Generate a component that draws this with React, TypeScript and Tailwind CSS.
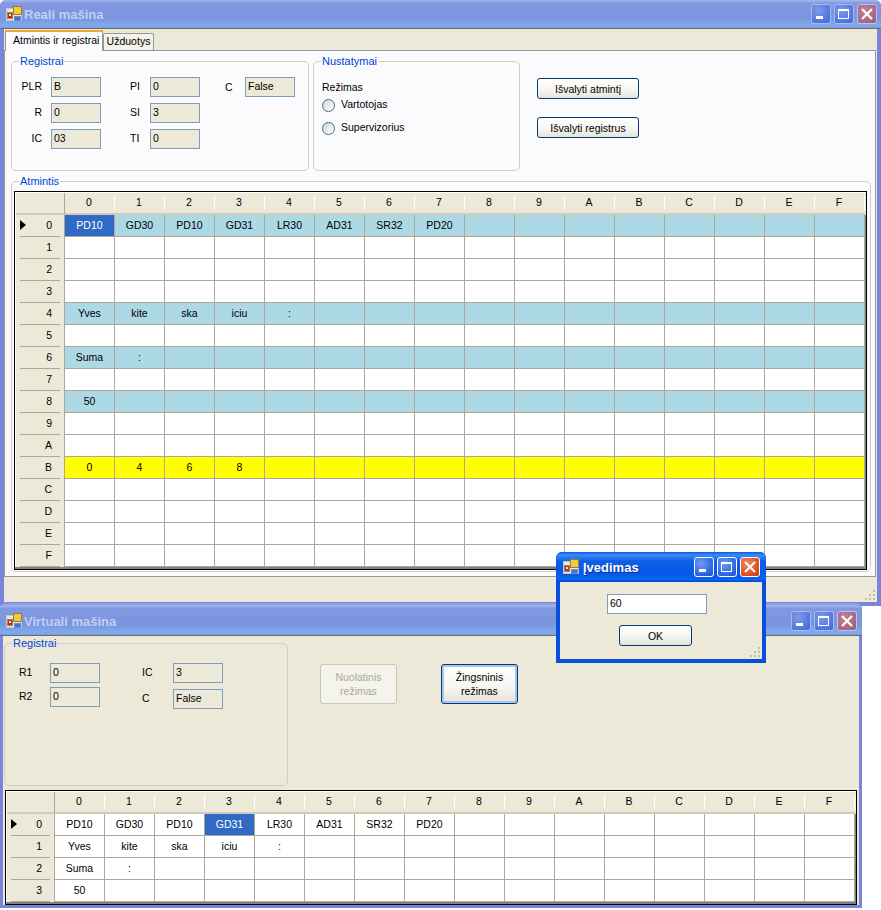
import React from 'react';

const ROW_LABELS = ['0', '1', '2', '3', '4', '5', '6', '7', '8', '9', 'A', 'B', 'C', 'D', 'E', 'F'];
const COLS = ROW_LABELS;
const PROGRAM = ['PD10', 'GD30', 'PD10', 'GD31', 'LR30', 'AD31', 'SR32', 'PD20'];

const AppIcon = () => (
  <svg width="16" height="16" viewBox="0 0 16 16" shapeRendering="crispEdges" className="shrink-0">
    <rect x="0" y="2" width="16" height="13" fill="#c9c6bd" />
    <rect x="1" y="3" width="14" height="11" fill="#e8e6dd" />
    <rect x="1" y="6" width="6" height="7" fill="#8c8a80" />
    <rect x="2" y="7" width="4" height="5" fill="#d2231c" />
    <rect x="3" y="8" width="2" height="2" fill="#f7e8a0" />
    <rect x="7" y="0" width="9" height="9" fill="#8f7f3d" />
    <rect x="8" y="1" width="7" height="7" fill="#f6c935" />
    <rect x="8" y="10" width="7" height="5" fill="#6d8fc7" />
    <rect x="9" y="11" width="5" height="3" fill="#3f76d8" />
  </svg>
);

const CaptionButton = ({ kind, active }: { kind: 'min' | 'max' | 'close'; active: boolean }) => {
  const tone =
    kind === 'close'
      ? active
        ? 'bg-[radial-gradient(circle_at_35%_30%,#ee8a5e,#df4f22_65%,#c23a14)] border-white'
        : 'bg-[radial-gradient(circle_at_35%_30%,#bb8296,#ab6580_70%,#9a5c7c)] border-[#b9c3ec]'
      : active
        ? 'bg-[radial-gradient(circle_at_35%_30%,#6f9bf5,#2f66e2_65%,#1f4fd0)] border-white'
        : 'bg-[radial-gradient(circle_at_35%_30%,#7f9be8,#4f75df_70%,#4468d8)] border-[#a9bbea]';
  return (
    <div className={`w-[20px] h-[20px] rounded-[3px] border flex items-center justify-center ${tone}`}>
      <svg width="18" height="18" viewBox="0 0 18 18" shapeRendering="crispEdges" fill="none">
        {kind === 'min' && <rect x="4" y="11" width="7" height="3" fill="#fff" />}
        {kind === 'max' && (
          <>
            <rect x="3.5" y="4.5" width="10" height="9" stroke="#fff" />
            <rect x="3" y="4" width="11" height="2" fill="#fff" />
          </>
        )}
        {kind === 'close' && (
          <path d="M4 4 L14 14 M14 4 L4 14" stroke="#fff" strokeWidth="2.2" shapeRendering="auto" />
        )}
      </svg>
    </div>
  );
};

const GroupBox = ({ title, legendBg, className, children }: { title: string; legendBg: string; className: string; children?: React.ReactNode }) => (
  <div className={`relative border border-[#d0d0bf] rounded-[5px] ${className}`}>
    <span className={`absolute left-[7px] -top-[8px] px-[1px] text-[#0046d5] text-[11px] leading-[14px] ${legendBg}`}>{title}</span>
    {children}
  </div>
);

const Field = ({ value, className = '' }: { value: string; className?: string }) => (
  <div className={`w-[50px] h-[20px] border border-[#7f9db9] bg-[#ece9d8] pl-[2px] flex items-center ${className}`}>{value}</div>
);

const XpButton = ({ children, className }: { children: React.ReactNode; className: string }) => (
  <div
    className={`border border-[#003c74] rounded-[3px] bg-[linear-gradient(180deg,#ffffff_0%,#f5f4ef_60%,#e6e3d8_100%)] flex items-center justify-center text-center leading-[14px] ${className}`}
  >
    {children}
  </div>
);

const Radio = ({ label }: { label: string }) => (
  <div className="flex items-center h-[14px]">
    <div className="w-[13px] h-[13px] rounded-full border border-[#3d6c9a] bg-[linear-gradient(135deg,#d8d6ca,#ffffff)] mr-[6px]" />
    <span>{label}</span>
  </div>
);

const Grip = () => (
  <svg width="12" height="12" viewBox="0 0 12 12" shapeRendering="crispEdges" className="absolute right-[1px] bottom-[1px]">
    {[[9, 1], [5, 5], [9, 5], [1, 9], [5, 9], [9, 9]].map(([x, y]) => (
      <g key={`${x}-${y}`}>
        <rect x={x} y={y} width="2" height="2" fill="#c2bfaf" />
      </g>
    ))}
  </svg>
);

interface GridRow {
  label: string;
  cells: string[];
  bg?: string;
}

const DataGrid = ({ rows, selected, headerWidth, className }: { rows: GridRow[]; selected: number; headerWidth: string; className: string }) => (
  <div className={`border-[1px] border-black bg-[#808080] ${className}`}>
    <div className="bg-[#ece9d8] border-t border-l border-white flex h-[23px]">
      <div className={`${headerWidth} shrink-0 border-r border-b-[2px] border-r-[#aca899] border-b-[#cfccbd]`} />
      {COLS.map((c) => (
        <div key={c} className="w-[50px] shrink-0 relative flex items-center justify-center border-b-[2px] border-[#cfccbd] pb-[1px] pr-[2px]">
          {c}
          <div className="absolute right-0 top-[3px] bottom-[3px] w-[1px] bg-[#d8d5c7] border-l border-white" />
        </div>
      ))}
    </div>
    {rows.map((row, r) => (
      <div key={row.label} className="flex h-[22px] border-l border-white">
        <div className={`${headerWidth} shrink-0 bg-[#ece9d8] border-r border-[#aca899] relative flex items-center justify-end pr-[12px]`}>
          {r === 0 && (
            <svg width="6" height="10" viewBox="0 0 6 10" className="absolute left-[4px] top-[5px]">
              <path d="M0 0 L6 5 L0 10 Z" fill="#000" />
            </svg>
          )}
          {row.label}
          <div className="absolute left-[4px] right-[4px] bottom-0 h-[1px] bg-[#aca899]" />
        </div>
        {COLS.map((_, c) => {
          const text = row.cells[c] ?? '';
          const isSel = r === 0 && c === selected;
          return (
            <div
              key={c}
              className={`w-[50px] shrink-0 border-r border-b border-[#aca899] flex items-center justify-center ${
                isSel ? 'bg-[#316ac5] text-white' : row.bg ?? 'bg-white'
              }`}
            >
              {text}
            </div>
          );
        })}
      </div>
    ))}
  </div>
);

const TitleBar = ({ title, className }: { title: string; className: string }) => (
  <div
    className={`flex items-center pl-[6px] rounded-t-[6px] border-b border-[#6c6a5c] bg-[linear-gradient(180deg,#a3b7ee_0%,#8299e2_12%,#7a94de_65%,#7faaee_90%,#7b9fe8_100%)] ${className}`}
  >
    <AppIcon />
    <span className="ml-[2px] pt-[2px] text-[13px] font-bold text-[#c3cff2] font-['Liberation_Sans',sans-serif] flex-1">{title}</span>
    <div className="flex gap-[3px]">
      <CaptionButton kind="min" active={false} />
      <CaptionButton kind="max" active={false} />
      <CaptionButton kind="close" active={false} />
    </div>
  </div>
);

const memoryRows: GridRow[] = ROW_LABELS.map((label) => {
  const blue = 'bg-[#add8e6]';
  if (label === '0') return { label, cells: PROGRAM, bg: blue };
  if (label === '4') return { label, cells: ['Yves', 'kite', 'ska', 'iciu', ':'], bg: blue };
  if (label === '6') return { label, cells: ['Suma', ':'], bg: blue };
  if (label === '8') return { label, cells: ['50'], bg: blue };
  if (label === 'B') return { label, cells: ['0', '4', '6', '8'], bg: 'bg-[#ffff00]' };
  return { label, cells: [] };
});

const virtualRows: GridRow[] = [
  { label: '0', cells: PROGRAM },
  { label: '1', cells: ['Yves', 'kite', 'ska', 'iciu', ':'] },
  { label: '2', cells: ['Suma', ':'] },
  { label: '3', cells: ['50'] },
];

const RealWindow = () => (
  <div className="absolute left-0 top-0 w-[881px] h-[606px] flex flex-col rounded-t-[6px] bg-[#7a84d8]">
    <TitleBar title="Reali mašina" className="h-[29px] shrink-0 pr-[4px]" />
    <div className="mx-[4px] mb-[4px] flex-1 bg-[#ece9d8] relative flex flex-col">
      <div className="flex items-end h-[21px] shrink-0 pl-[1px]">
        <div className="w-[98px] h-[21px] bg-[#fcfcfe] border-x border-[#919b9c] border-t-[2px] border-t-[#f0a63c] pl-[7px] pt-[1px] whitespace-nowrap relative z-10 translate-y-[1px]">
          Atmintis ir registrai
        </div>
        <div className="w-[51px] h-[17px] bg-[#f3f1e8] border border-b-0 border-[#919b9c] rounded-t-[2px] flex items-center justify-center">
          Užduotys
        </div>
      </div>
      <div className="w-[872px] h-[527px] border border-[#919b9c] bg-[#fbfbfd] pl-[6px] pt-[10px] shrink-0">
        <div className="flex">
          <GroupBox title="Registrai" legendBg="bg-[#fbfbfd]" className="w-[298px] h-[110px] pl-[8px] pt-[15px] flex">
            <div className="flex flex-col gap-[6px] w-[110px]">
              {[['PLR', 'B'], ['R', '0'], ['IC', '03']].map(([l, v]) => (
                <div key={l} className="flex items-center">
                  <span className="w-[22px] text-right mr-[9px]">{l}</span>
                  <Field value={v} />
                </div>
              ))}
            </div>
            <div className="flex flex-col gap-[6px] w-[95px]">
              {[['PI', '0'], ['SI', '3'], ['TI', '0']].map(([l, v]) => (
                <div key={l} className="flex items-center">
                  <span className="w-[20px]">{l}</span>
                  <Field value={v} />
                </div>
              ))}
            </div>
            <div className="flex items-start">
              <span className="w-[20px] leading-[20px]">C</span>
              <Field value="False" />
            </div>
          </GroupBox>
          <GroupBox title="Nustatymai" legendBg="bg-[#fbfbfd]" className="w-[207px] h-[110px] ml-[4px] pl-[8px] pt-[18px]">
            <div className="leading-[14px] mb-[4px]">Režimas</div>
            <div className="flex flex-col gap-[9px]">
              <Radio label="Vartotojas" />
              <Radio label="Supervizorius" />
            </div>
          </GroupBox>
          <div className="ml-[17px] mt-[17px] flex flex-col gap-[18px]">
            <XpButton className="w-[102px] h-[21px]">Išvalyti atmintį</XpButton>
            <XpButton className="w-[102px] h-[21px]">Išvalyti registrus</XpButton>
          </div>
        </div>
        <GroupBox title="Atmintis" legendBg="bg-[#fbfbfd]" className="w-[860px] h-[391px] mt-[10px] pl-[2px] pt-[9px]">
          <DataGrid rows={memoryRows} selected={0} headerWidth="w-[49px]" className="w-[853px] h-[379px]" />
        </GroupBox>
      </div>
      <Grip />
    </div>
  </div>
);

const VirtualWindow = () => (
  <div className="absolute left-0 top-[603px] w-[862px] h-[305px] flex flex-col rounded-t-[6px] bg-[#7a84d8]">
    <TitleBar title="Virtuali mašina" className="h-[33px] shrink-0 pr-[5px] pt-[1px] border-t-2 border-t-[#8ba0e8]" />
    <div className="mx-[3px] mb-[3px] flex-1 bg-[#ece9d8] pt-[7px] flex flex-col">
      <div className="flex ml-[1px]">
        <GroupBox title="Registrai" legendBg="bg-[#ece9d8]" className="w-[284px] h-[143px] pl-[14px] pt-[19px] flex">
          <div className="flex flex-col gap-[4px] w-[123px]">
            {[['R1', '0'], ['R2', '0']].map(([l, v]) => (
              <div key={l} className="flex items-center">
                <span className="w-[31px]">{l}</span>
                <Field value={v} />
              </div>
            ))}
          </div>
          <div className="flex flex-col gap-[6px]">
            {[['IC', '3'], ['C', 'False']].map(([l, v]) => (
              <div key={l} className="flex items-center">
                <span className="w-[31px]">{l}</span>
                <Field value={v} />
              </div>
            ))}
          </div>
        </GroupBox>
        <div className="ml-[32px] mt-[21px] flex gap-[44px]">
          <div className="w-[77px] h-[40px] border border-[#c9c7ba] rounded-[3px] bg-[#f4f3ec] text-[#aca899] flex items-center justify-center text-center leading-[14px]">
            Nuolatinis<br />režimas
          </div>
          <XpButton className="w-[77px] h-[40px] shadow-[inset_0_0_0_2px_#a9c4ee]">
            Žingsninis<br />režimas
          </XpButton>
        </div>
      </div>
      <DataGrid rows={virtualRows} selected={3} headerWidth="w-[48px]" className="ml-[2px] mt-[4px] w-[852px] h-[115px]" />
    </div>
  </div>
);

const InputDialog = () => (
  <div className="absolute left-[556px] top-[552px] w-[210px] h-[111px] rounded-t-[6px] bg-[#0a4fdc] flex flex-col">
    <div className="h-[30px] shrink-0 flex items-center pl-[7px] pr-[6px] rounded-t-[6px] bg-[linear-gradient(180deg,#0a5ae0_0%,#3a8cf6_10%,#0f5fe6_30%,#0558e6_70%,#0a62f2_92%,#0346c8_100%)]">
      <AppIcon />
      <span className="ml-[4px] pt-[2px] flex-1 text-[13px] font-bold text-white font-['Liberation_Sans',sans-serif] [text-shadow:1px_1px_0_#0b2f94]">Įvedimas</span>
      <div className="flex gap-[3px]">
        <CaptionButton kind="min" active />
        <CaptionButton kind="max" active />
        <CaptionButton kind="close" active />
      </div>
    </div>
    <div className="relative mx-[4px] mb-[4px] flex-1 bg-[#ece9d8] flex flex-col items-start pt-[12px]">
      <div className="w-[100px] h-[20px] ml-[47px] border border-[#7f9db9] bg-white pl-[2px] flex items-center">60</div>
      <XpButton className="w-[73px] h-[21px] ml-[59px] mt-[11px]">OK</XpButton>
      <Grip />
    </div>
  </div>
);

export default function App() {
  return (
    <div className="relative w-[881px] h-[910px] bg-white overflow-hidden text-[10.5px] text-black font-['Liberation_Sans',sans-serif]">
      <RealWindow />
      <VirtualWindow />
      <InputDialog />
    </div>
  );
}
